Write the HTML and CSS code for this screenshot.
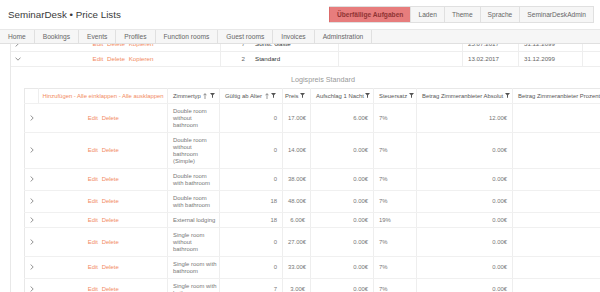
FILE: index.html
```html
<!DOCTYPE html>
<html lang="de">
    <head>
        <meta charset="UTF-8">
        <meta name="viewport" content="width=device-width, initial-scale=1.0">
        <title>SeminarDesk • Price Lists</title>
        <link rel="stylesheet" href="styles.css">
    </head>
    <body>
        <div class="topbar">
            <div class="brand">SeminarDesk • Price Lists</div>
            <div class="actions">
                <a class="btn btn-danger">Überfällige Aufgaben</a>
                <a class="btn">Laden</a>
                <a class="btn">Theme</a>
                <a class="btn">Sprache</a>
                <a class="btn">SeminarDeskAdmin</a>
            </div>
        </div>
        <div class="menu">
            <a>Home</a>
            <a>Bookings</a>
            <a>Events</a>
            <a>Profiles</a>
            <a>Function rooms</a>
            <a>Guest rooms</a>
            <a>Invoices</a>
            <a>Adminstration</a>
        </div>

        <div class="main">
            <div class="orow">
                <div class="ocaret"><svg class="chev-r" viewBox="0 0 4 6"><path d="M.6.5 3.2 3 .6 5.5"/></svg></div>
                <div class="links center"><span>Edit</span> <span>Delete</span> <span>Kopieren</span></div>
                <div class="line num">7</div>
                <div class="name">Sonst. Gäste</div>
                <div class="line"></div>
                <div class="line">25.07.2017</div>
                <div class="line">31.12.2099</div>
                <div class="line"></div>
            </div>
            <div class="orow">
                <div class="ocaret"><svg class="chev-d" viewBox="0 0 6 4"><path d="M.5.6 3 3.2 5.5.6"/></svg></div>
                <div class="links center"><span>Edit</span> <span>Delete</span> <span>Kopieren</span></div>
                <div class="line num">2</div>
                <div class="name">Standard</div>
                <div class="line"></div>
                <div class="line">13.02.2017</div>
                <div class="line">31.12.2099</div>
                <div class="line"></div>
            </div>

            <div class="detail">
                <div class="detail-title">Logispreis Standard</div>
                <table class="prices">
                    <colgroup>
                        <col style="width:14px"><col style="width:129px"><col style="width:52px">
                        <col style="width:63px"><col style="width:28px"><col style="width:63px">
                        <col style="width:43px"><col style="width:96px"><col style="width:112px">
                    </colgroup>
                    <thead>
                        <tr>
                            <th></th>
                            <th class="links center tools">Hinzufügen - Alle einklappen - Alle ausklappen</th>
                            <th>Zimmertyp <svg class="sort" viewBox="0 0 4 6"><path d="M2 6V.7M.4 2.3 2 .7 3.6 2.3"/></svg> <svg class="filter" viewBox="0 0 5 5"><path d="M0 0h5L3 2.3V5L2 4.4V2.3Z"/></svg></th>
                            <th>Gültig ab Alter <svg class="sort" viewBox="0 0 4 6"><path d="M2 6V.7M.4 2.3 2 .7 3.6 2.3"/></svg> <svg class="filter" viewBox="0 0 5 5"><path d="M0 0h5L3 2.3V5L2 4.4V2.3Z"/></svg></th>
                            <th class="tight">Preis <svg class="filter" viewBox="0 0 5 5"><path d="M0 0h5L3 2.3V5L2 4.4V2.3Z"/></svg></th>
                            <th>Aufschlag 1 Nacht <svg class="filter" viewBox="0 0 5 5"><path d="M0 0h5L3 2.3V5L2 4.4V2.3Z"/></svg></th>
                            <th>Steuersatz <svg class="filter" viewBox="0 0 5 5"><path d="M0 0h5L3 2.3V5L2 4.4V2.3Z"/></svg></th>
                            <th>Betrag Zimmeranbieter Absolut <svg class="filter" viewBox="0 0 5 5"><path d="M0 0h5L3 2.3V5L2 4.4V2.3Z"/></svg></th>
                            <th>Betrag Zimmeranbieter Prozent <svg class="filter" viewBox="0 0 5 5"><path d="M0 0h5L3 2.3V5L2 4.4V2.3Z"/></svg></th>
                        </tr>
                    </thead>
                    <tbody>
                        <tr>
                            <td class="caret"><svg class="chev-r" viewBox="0 0 4 6"><path d="M.6.5 3.2 3 .6 5.5"/></svg></td>
                            <td class="links center"><span>Edit</span> <span>Delete</span></td>
                            <td class="type">Double room<br>without<br>bathroom</td>
                            <td class="num">0</td><td class="num">17.00€</td><td class="num">6.00€</td>
                            <td>7%</td><td class="num">12.00€</td><td class="num">0.00%</td>
                        </tr>
                        <tr>
                            <td class="caret"><svg class="chev-r" viewBox="0 0 4 6"><path d="M.6.5 3.2 3 .6 5.5"/></svg></td>
                            <td class="links center"><span>Edit</span> <span>Delete</span></td>
                            <td class="type">Double room<br>without<br>bathroom<br>(Simple)</td>
                            <td class="num">0</td><td class="num">14.00€</td><td class="num">0.00€</td>
                            <td>7%</td><td class="num">0.00€</td><td class="num">0.00%</td>
                        </tr>
                        <tr>
                            <td class="caret"><svg class="chev-r" viewBox="0 0 4 6"><path d="M.6.5 3.2 3 .6 5.5"/></svg></td>
                            <td class="links center"><span>Edit</span> <span>Delete</span></td>
                            <td class="type">Double room<br>with bathroom</td>
                            <td class="num">0</td><td class="num">38.00€</td><td class="num">0.00€</td>
                            <td>7%</td><td class="num">0.00€</td><td class="num">0.00%</td>
                        </tr>
                        <tr>
                            <td class="caret"><svg class="chev-r" viewBox="0 0 4 6"><path d="M.6.5 3.2 3 .6 5.5"/></svg></td>
                            <td class="links center"><span>Edit</span> <span>Delete</span></td>
                            <td class="type">Double room<br>with bathroom</td>
                            <td class="num">18</td><td class="num">48.00€</td><td class="num">0.00€</td>
                            <td>7%</td><td class="num">0.00€</td><td class="num">0.00%</td>
                        </tr>
                        <tr>
                            <td class="caret"><svg class="chev-r" viewBox="0 0 4 6"><path d="M.6.5 3.2 3 .6 5.5"/></svg></td>
                            <td class="links center"><span>Edit</span> <span>Delete</span></td>
                            <td class="type">External lodging</td>
                            <td class="num">18</td><td class="num">6.00€</td><td class="num">0.00€</td>
                            <td>19%</td><td class="num">0.00€</td><td class="num">0.00%</td>
                        </tr>
                        <tr>
                            <td class="caret"><svg class="chev-r" viewBox="0 0 4 6"><path d="M.6.5 3.2 3 .6 5.5"/></svg></td>
                            <td class="links center"><span>Edit</span> <span>Delete</span></td>
                            <td class="type">Single room<br>without<br>bathroom</td>
                            <td class="num">0</td><td class="num">27.00€</td><td class="num">0.00€</td>
                            <td>7%</td><td class="num">0.00€</td><td class="num">0.00%</td>
                        </tr>
                        <tr>
                            <td class="caret"><svg class="chev-r" viewBox="0 0 4 6"><path d="M.6.5 3.2 3 .6 5.5"/></svg></td>
                            <td class="links center"><span>Edit</span> <span>Delete</span></td>
                            <td class="type">Single room with<br>bathroom</td>
                            <td class="num">0</td><td class="num">33.00€</td><td class="num">0.00€</td>
                            <td>7%</td><td class="num">0.00€</td><td class="num">0.00%</td>
                        </tr>
                        <tr>
                            <td class="caret"><svg class="chev-r" viewBox="0 0 4 6"><path d="M.6.5 3.2 3 .6 5.5"/></svg></td>
                            <td class="links center"><span>Edit</span> <span>Delete</span></td>
                            <td class="type">Single room with<br>bathroom</td>
                            <td class="num">7</td><td class="num">3.00€</td><td class="num">0.00€</td>
                            <td>7%</td><td class="num">0.00€</td><td class="num">0.00%</td>
                        </tr>
                    </tbody>
                </table>
            </div>
        </div>
    </body>
</html>
```

FILE: styles.css
```css
*{
    margin: 0;
    padding: 0;
    box-sizing: border-box;
}
body{
    font-family: "Liberation Sans", Arial, sans-serif;
    color: #777;
    background-color: #fff;
    width: 600px;
    height: 292px;
    overflow: hidden;
}
svg{
    display: inline-block;
    vertical-align: middle;
}

/* header */
.topbar{
    height: 29px;
    display: flex;
    align-items: center;
    justify-content: space-between;
    padding: 0 6px 0 8px;
}
.brand{
    font-size: 9.8px;
    color: #3a3a3a;
}
.actions{
    display: flex;
    border: 1px solid #e0e0e0;
    border-left: none;
}
.btn{
    font-size: 6.65px;
    line-height: 15px;
    padding: 0 7px;
    color: #666;
    background-color: #f6f6f6;
    border-left: 1px solid #e0e0e0;
}
.btn-danger{
    background-color: #e77d7d;
    border-left-color: #dc6b6b;
    color: #8f3434;
    font-weight: bold;
}

/* menu */
.menu{
    display: flex;
    height: 15px;
    background-color: #f6f6f6;
    border-top: 1px solid #e8e8e8;
    border-bottom: 1px solid #e0e0e0;
    position: relative;
    z-index: 2;
}
.menu a{
    font-size: 6.65px;
    line-height: 13px;
    padding: 0 8px;
    color: #666;
    border-right: 1px solid #e0e0e0;
}

/* outer table */
.main{
    margin: -7px 0 0 10px;
    width: 612px;
    border-left: 1px solid #e8e8e8;
}
.orow{
    display: grid;
    grid-template-columns: 15px 194px 30px 88px 124px 56px 64px 40px;
    height: 15px;
    border-bottom: 1px solid #eee;
    font-size: 6.2px;
    line-height: 14px;
}
.orow > div{
    padding: 0 5px;
    white-space: nowrap;
}
.orow .ocaret{
    padding: 0 0 0 4px;
}
.orow .line{
    border-left: 1px solid #eee;
    color: #666;
}
.orow .name{
    color: #333;
}
.chev-r{
    width: 4px;
    height: 6px;
}
.chev-d{
    width: 6px;
    height: 4px;
}
.chev-r path, .chev-d path{
    fill: none;
    stroke: #666;
    stroke-width: 0.7;
}
.links{
    color: #f28a62;
}
.links span{
    margin: 0 1px;
}
.center{
    text-align: center;
}
.num{
    text-align: right;
}

/* detail */
.detail{
    padding: 8px 0 0 13px;
}
.detail-title{
    text-align: center;
    font-size: 7.2px;
    line-height: 10px;
    color: #999;
    margin-bottom: 3px;
}
.prices{
    border-collapse: collapse;
    table-layout: fixed;
    width: 600px;
    font-size: 5.9px;
    line-height: 7px;
    border-left: 1px solid #e8e8e8;
    border-top: 1px solid #e8e8e8;
}
.prices th, .prices td{
    padding: 3.5px 4px 3.5px 5px;
    border-bottom: 1px solid #f0f0f0;
    border-right: 1px solid #eee;
    vertical-align: middle;
}
.prices th{
    font-weight: normal;
    color: #555;
    text-align: left;
    white-space: nowrap;
    overflow: hidden;
}
.prices th.tools{
    padding: 3.5px 2px;
    text-align: center;
    color: #f28a62;
}
.prices th.tight{
    padding-left: 2px;
}
.prices td.type{
    white-space: nowrap;
    padding-right: 1px;
}
.prices td.caret{
    border-right: none;
    padding: 0 0 0 5px;
}
.prices td.num{
    padding-right: 5px;
}
.sort{
    width: 4px;
    height: 6px;
    margin: 0 1px;
}
.sort path{
    fill: none;
    stroke: #555;
    stroke-width: 0.6;
}
.filter{
    width: 5px;
    height: 5px;
}
.filter path{
    fill: #555;
}
```
